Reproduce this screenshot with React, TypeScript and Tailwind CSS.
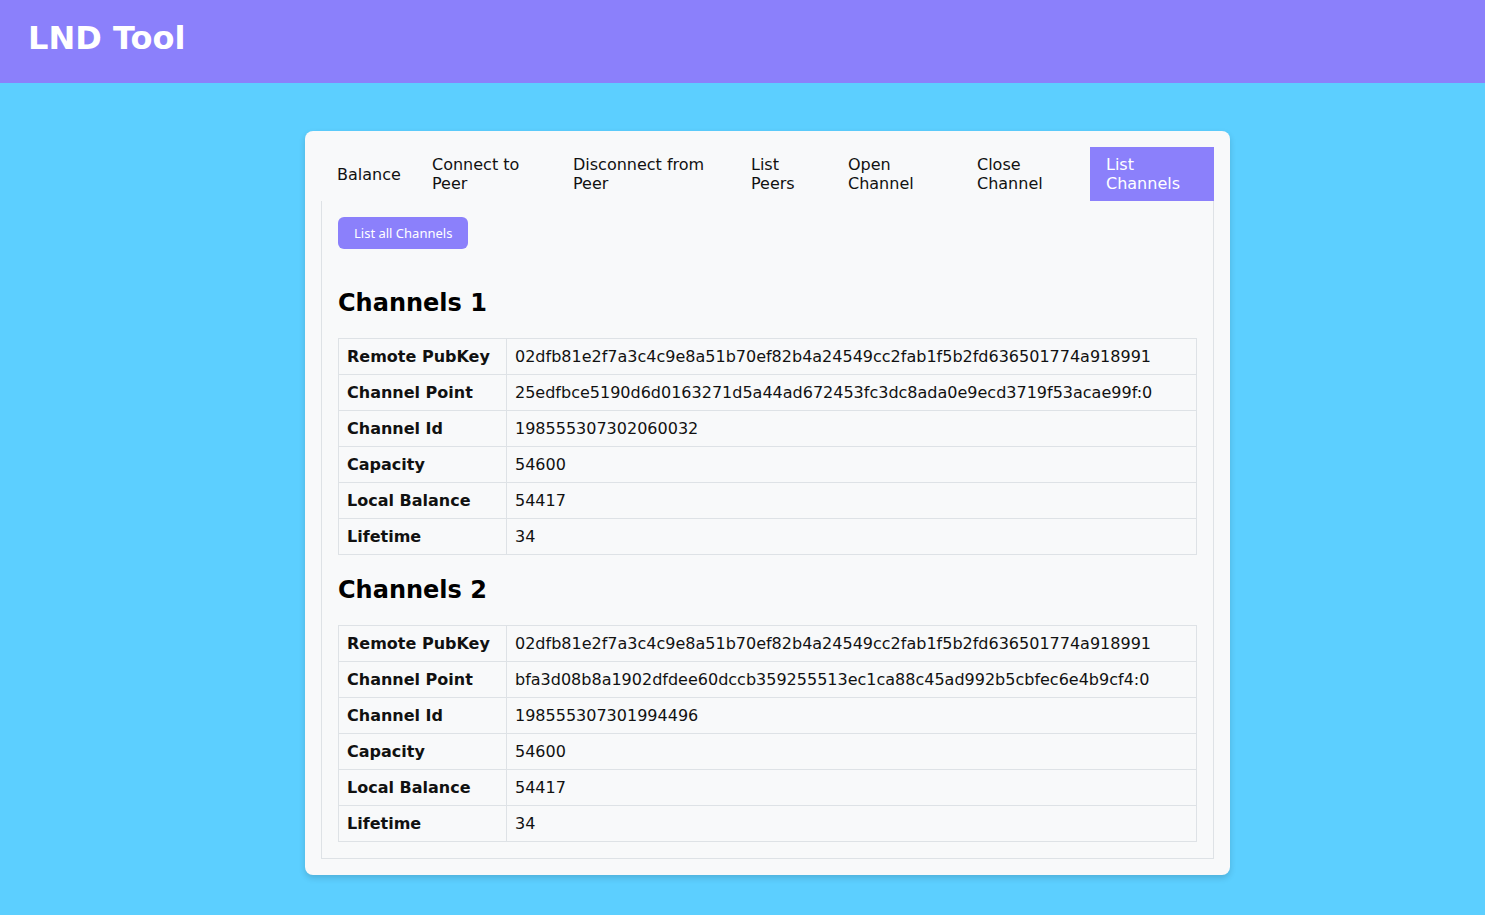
const font = { fontFamily: '"DejaVu Sans", sans-serif' };

const tabs = [
  { label: "Balance", w: "w-[95px]" },
  { label: "Connect to Peer", w: "w-[141px]" },
  { label: "Disconnect from Peer", w: "w-[178px]" },
  { label: "List Peers", w: "w-[97px]" },
  { label: "Open Channel", w: "w-[129px]" },
  { label: "Close Channel", w: "w-[129px]" },
  { label: "List Channels", w: "w-[124px]", active: true },
];

const channels = [
  {
    pubkey: "02dfb81e2f7a3c4c9e8a51b70ef82b4a24549cc2fab1f5b2fd636501774a918991",
    point: "25edfbce5190d6d0163271d5a44ad672453fc3dc8ada0e9ecd3719f53acae99f:0",
    id: "198555307302060032",
    capacity: "54600",
    local: "54417",
    lifetime: "34",
  },
  {
    pubkey: "02dfb81e2f7a3c4c9e8a51b70ef82b4a24549cc2fab1f5b2fd636501774a918991",
    point: "bfa3d08b8a1902dfdee60dccb359255513ec1ca88c45ad992b5cbfec6e4b9cf4:0",
    id: "198555307301994496",
    capacity: "54600",
    local: "54417",
    lifetime: "34",
  },
];

function ChannelTable({ c }: { c: (typeof channels)[number] }) {
  const rows: [string, string][] = [
    ["Remote PubKey", c.pubkey],
    ["Channel Point", c.point],
    ["Channel Id", c.id],
    ["Capacity", c.capacity],
    ["Local Balance", c.local],
    ["Lifetime", c.lifetime],
  ];
  return (
    <table className="w-full border-collapse border border-[#dee2e6] text-[16px] text-[#111]">
      <tbody>
        {rows.map(([k, v]) => (
          <tr key={k} className="h-[36px]">
            <th className="w-[168px] border border-[#dee2e6] px-2 text-left font-bold">{k}</th>
            <td className="border border-[#dee2e6] px-2">{v}</td>
          </tr>
        ))}
      </tbody>
    </table>
  );
}

export default function App() {
  return (
    <div className="min-h-screen bg-[#5ccfff]" style={font}>
      <header className="flex h-[83px] items-center bg-[#8b80fb] px-[28px] pb-[8px]">
        <h1 className="text-[32px] font-bold leading-none text-white">LND Tool</h1>
      </header>
      <main className="flex justify-center pt-[48px] pb-10 pl-[50px]">
        <div className="w-[925px] rounded-lg bg-[#f8f9fa] p-4 shadow-[0_3px_6px_rgba(0,0,0,0.15)]">
          <nav className="flex">
            {tabs.map((t) => (
              <div
                key={t.label}
                className={`flex h-[54px] items-center px-4 text-[16px] leading-[19px] ${t.w} ${
                  t.active ? "bg-[#8b80fb] text-white" : "text-[#111]"
                }`}
              >
                {t.label}
              </div>
            ))}
          </nav>
          <section className="flex flex-col items-start border-x border-b border-[#dee2e6] p-4">
            <button
              className="mb-[19px] h-[32px] rounded-md bg-[#8b80fb] px-4 pt-[1px] text-[13px] text-white"
              style={{ fontFamily: '"Noto Sans", sans-serif' }}
            >
              List all Channels
            </button>
            {channels.map((c, i) => (
              <div key={i} className="flex w-full flex-col">
                <h2 className="mt-5 mb-[19px] text-[24px] font-bold leading-[31px] text-black">
                  Channels {i + 1}
                </h2>
                <ChannelTable c={c} />
              </div>
            ))}
          </section>
        </div>
      </main>
    </div>
  );
}
